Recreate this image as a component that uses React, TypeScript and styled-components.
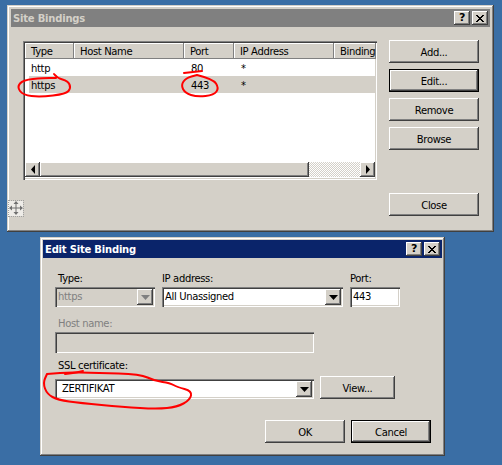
import React from 'react'
import styled, { createGlobalStyle, css } from 'styled-components'

const columns = [
  { label: 'Type', width: 49 },
  { label: 'Host Name', width: 110 },
  { label: 'Port', width: 50 },
  { label: 'IP Address', width: 100 },
  { label: 'Binding', width: 42 },
]

const bindings = [
  { type: 'http', port: '80', ip: '*', selected: false },
  { type: 'https', port: '443', ip: '*', selected: true },
]

// hand drawn red marks, smoothed through their midpoints
const marks: number[][][] = [
  [[54, 74], [57, 78], [68, 81], [71, 88], [66, 94], [40, 97], [23, 95], [17, 87], [23, 80], [43, 78], [56, 78]],
  [[184, 73], [193, 72], [202, 71]],
  [[197, 75], [213, 79], [219, 88], [214, 95], [197, 97], [185, 93], [181, 85], [186, 78], [197, 75]],
  [[65, 374], [74, 373], [83, 371]],
  [[47, 374], [63, 372], [97, 373], [140, 374], [155, 381], [170, 383], [177, 387], [192, 391], [190, 400], [177, 407], [157, 409], [123, 407], [80, 403], [58, 400], [47, 394], [43, 383], [47, 374]],
]

function smooth(points: number[][]) {
  let d = `M${points[0][0]} ${points[0][1]}`
  for (let i = 1; i < points.length - 1; i++) {
    const midX = (points[i][0] + points[i + 1][0]) / 2
    const midY = (points[i][1] + points[i + 1][1]) / 2
    d += `Q${points[i][0]} ${points[i][1]} ${midX} ${midY}`
  }
  const last = points[points.length - 1]
  return `${d}L${last[0]} ${last[1]}`
}

function TitleButtons() {
  return (
    <Controls>
      <ControlButton>?</ControlButton>
      <ControlButton>
        <svg width="10" height="9" viewBox="0 0 10 9">
          <path d="M1 1l7 7M2 1l7 7M8 1L1 8M9 1L2 8" stroke="#000" strokeWidth="1" fill="none" />
        </svg>
      </ControlButton>
    </Controls>
  )
}

function Arrow({ dir, color = '#000' }: { dir: 'left' | 'right' | 'down'; color?: string }) {
  const shape = {
    left: 'M5 0v9L1 4.500z',
    right: 'M1 0v9l4-4.500z',
    down: 'M0 1h9L4.500 6z',
  }[dir]
  return (
    <svg width={dir === 'down' ? 9 : 6} height={dir === 'down' ? 6 : 9} viewBox={dir === 'down' ? '0 0 9 6' : '0 0 6 9'}>
      <path d={shape} fill={color} />
    </svg>
  )
}

function Combo({ value, disabled, width, indent = 1 }: { value: string; disabled?: boolean; width: number; indent?: number }) {
  return (
    <Sunken $width={width} $height={20} $disabled={disabled}>
      <ComboValue $disabled={disabled} $indent={indent}>
        {value}
      </ComboValue>
      <ComboArrow>
        <Arrow dir="down" color={disabled ? '#808080' : '#000'} />
      </ComboArrow>
    </Sunken>
  )
}

export default function App() {
  return (
    <>
      <GlobalStyle />
      <Page>
        <SiteBindings>
          <TitleBar>
            Site Bindings
            <TitleButtons />
          </TitleBar>
          <BindingsBody>
            <List>
              <HeaderRow>
                {columns.map((c) => (
                  <HeaderCell key={c.label} $width={c.width}>
                    {c.label}
                  </HeaderCell>
                ))}
              </HeaderRow>
              <Rows>
                {bindings.map((b) => (
                  <Row key={b.type} $selected={b.selected}>
                    <Cell $width={49}>{b.type}</Cell>
                    <Cell $width={111} />
                    <Cell $width={50}>{b.port}</Cell>
                    <Cell $width={99}>{b.ip}</Cell>
                  </Row>
                ))}
              </Rows>
              <Scrollbar>
                <ScrollButton>
                  <Arrow dir="left" />
                </ScrollButton>
                <ScrollThumb />
                <ScrollTrack />
                <ScrollButton>
                  <Arrow dir="right" />
                </ScrollButton>
              </Scrollbar>
            </List>
            <ButtonColumn>
              <Button $width={90}>Add...</Button>
              <Button $width={90} $focused>
                Edit...
              </Button>
              <Button $width={90}>Remove</Button>
              <Button $width={90}>Browse</Button>
              <CloseSlot>
                <Button $width={90}>Close</Button>
              </CloseSlot>
            </ButtonColumn>
          </BindingsBody>
          <Grip>
            <svg width="14" height="14" viewBox="0 0 14 14">
              <path d="M7 2v10M2 7h10" stroke="#707070" fill="none" />
              <path d="M7 0l2.500 3h-5zM7 14l-2.500-3h5zM0 7l3-2.500v5zM14 7l-3 2.500v-5z" fill="#707070" />
            </svg>
          </Grip>
        </SiteBindings>

        <EditBinding>
          <ActiveTitleBar>
            Edit Site Binding
            <TitleButtons />
          </ActiveTitleBar>
          <EditBody>
            <FieldRow>
              <Field>
                <Label>Type:</Label>
                <Combo value="https" disabled width={100} />
              </Field>
              <Field>
                <FlushLabel>IP address:</FlushLabel>
                <Combo value="All Unassigned" width={181} />
              </Field>
              <Field>
                <FlushLabel>Port:</FlushLabel>
                <Sunken $width={50} $height={20}>
                  <ComboValue $indent={1}>443</ComboValue>
                </Sunken>
              </Field>
            </FieldRow>
            <HostField>
              <Label $disabled>Host name:</Label>
              <Sunken $width={259} $height={21} $disabled />
            </HostField>
            <SslField>
              <Label>SSL certificate:</Label>
              <CertRow>
                <Combo value="ZERTIFIKAT" width={259} indent={5} />
                <Button $width={75}>View...</Button>
              </CertRow>
            </SslField>
            <Footer>
              <Button $width={80}>OK</Button>
              <Button $width={80} $focused>
                Cancel
              </Button>
            </Footer>
          </EditBody>
        </EditBinding>

        <Scribbles viewBox="0 0 502 465">
          {marks.map((m, i) => (
            <path key={i} d={smooth(m)} />
          ))}
        </Scribbles>
      </Page>
    </>
  )
}

///////////////////////////////////////////////////////////////////////////////////

const GlobalStyle = createGlobalStyle`
  html, body {
    margin: 0;
    background: #3a6ea5;
    overflow: hidden;
  }
  body {
    font-family: "DejaVu Sans", "Liberation Sans", sans-serif;
    font-size: 10px;
    letter-spacing: -0.35px;
    color: #000;
  }
`

const raised = css`
  box-shadow: inset -1px -1px 0 #404040, inset 1px 1px 0 #fff, inset -2px -2px 0 #808080;
`

const Page = styled.div`
  position: relative;
  width: 502px;
  height: 465px;
  padding-top: 5px;
  box-sizing: border-box;
  display: flex;
  flex-direction: column;
  gap: 5px;
`

const Window = styled.div`
  position: relative;
  box-sizing: border-box;
  background: #d4d0c8;
  display: flex;
  flex-direction: column;
  box-shadow: inset -1px -1px 0 #404040, inset 1px 1px 0 #d4d0c8, inset -2px -2px 0 #808080, inset 2px 2px 0 #fff;
`

const SiteBindings = styled(Window)`
  margin-left: 7px;
  width: 487px;
  height: 227px;
  padding: 4px;
`

const EditBinding = styled(Window)`
  margin-left: 40px;
  width: 405px;
  height: 219px;
  padding: 3px;
`

const TitleBar = styled.div`
  position: relative;
  flex: none;
  height: 18px;
  line-height: 19px;
  padding-left: 2px;
  background: #808080;
  color: #d4d0c8;
  font-size: 10px;
  font-weight: 700;
  letter-spacing: -0.2px;
`

const ActiveTitleBar = styled(TitleBar)`
  background: #0a246a;
  color: #fff;
`

const Controls = styled.div`
  position: absolute;
  top: 2px;
  right: 2px;
  display: flex;
  gap: 2px;
`

const ControlButton = styled.div`
  ${raised}
  width: 16px;
  height: 14px;
  background: #d4d0c8;
  color: #000;
  display: flex;
  align-items: center;
  justify-content: center;
  font-size: 11px;
  line-height: 14px;
  font-weight: 700;
`

const BindingsBody = styled.div`
  flex: 1;
  display: flex;
  gap: 12px;
  padding: 13px 0 0 12px;
`

const List = styled.div`
  box-sizing: border-box;
  width: 354px;
  height: 139px;
  margin-top: 1px;
  padding: 2px;
  background: #fff;
  display: flex;
  flex-direction: column;
  overflow: hidden;
  box-shadow: inset 1px 1px 0 #808080, inset 2px 2px 0 #404040, inset -1px -1px 0 #fff, inset -2px -2px 0 #d4d0c8;
`

const HeaderRow = styled.div`
  flex: none;
  display: flex;
  height: 16px;
`

const HeaderCell = styled.div<{ $width: number }>`
  box-sizing: border-box;
  flex: none;
  width: ${(p) => p.$width}px;
  height: 16px;
  line-height: 18px;
  padding-left: 6px;
  background: #d4d0c8;
  white-space: nowrap;
  overflow: hidden;
  box-shadow: inset -1px -1px 0 #808080, inset 1px 1px 0 #fff;
`

const Rows = styled.div`
  flex: 1;
`

const Row = styled.div<{ $selected: boolean }>`
  display: flex;
  height: 17px;
  line-height: 19px;
  margin-left: 4px;
  background: ${(p) => (p.$selected ? '#d4d0c8' : 'transparent')};
`

const Cell = styled.div<{ $width: number }>`
  flex: none;
  box-sizing: border-box;
  width: ${(p) => p.$width}px;
  padding-left: 2px;
`

const Scrollbar = styled.div`
  flex: none;
  display: flex;
  height: 15px;
  margin-bottom: 1px;
`

const ScrollButton = styled.div`
  ${raised}
  flex: none;
  width: 15px;
  background: #d4d0c8;
  display: flex;
  align-items: center;
  justify-content: center;
`

const ScrollThumb = styled.div`
  ${raised}
  flex: none;
  width: 269px;
  background: #d4d0c8;
`

const ScrollTrack = styled.div`
  flex: 1;
  background: repeating-conic-gradient(#fff 0 25%, #d4d0c8 0 50%) 0 0 / 2px 2px;
`

const ButtonColumn = styled.div`
  display: flex;
  flex-direction: column;
  gap: 6px;
`

const CloseSlot = styled.div`
  margin-top: 37px;
`

const Button = styled.div<{ $width: number; $focused?: boolean }>`
  box-sizing: border-box;
  width: ${(p) => p.$width}px;
  height: 23px;
  padding-top: 2px;
  line-height: 22px;
  flex: none;
  text-align: center;
  background: #d4d0c8;
  ${(p) =>
    p.$focused
      ? 'box-shadow: inset 0 0 0 1px #000, inset -2px -2px 0 #404040, inset 2px 2px 0 #fff, inset -3px -3px 0 #808080;'
      : 'box-shadow: inset -1px -1px 0 #404040, inset 1px 1px 0 #fff, inset -2px -2px 0 #808080;'}
`

const Grip = styled.div`
  position: absolute;
  left: 2px;
  bottom: 16px;
  width: 14px;
  height: 15px;
  background: #eeece8;
  outline: 1px dotted #a0a0a0;
`

const EditBody = styled.div`
  flex: 1;
  display: flex;
  flex-direction: column;
  padding: 13px 12px 0;
`

const FieldRow = styled.div`
  display: flex;
  gap: 7px;
`

const Field = styled.div`
  display: flex;
  flex-direction: column;
  gap: 1px;
`

const Label = styled.div<{ $disabled?: boolean }>`
  height: 15px;
  line-height: 15px;
  padding-left: 3px;
  color: ${(p) => (p.$disabled ? '#808080' : '#000')};
`

const FlushLabel = styled(Label)`
  padding-left: 0;
`

const HostField = styled(Field)`
  margin-top: 9px;
`

const SslField = styled.div`
  margin-top: 5px;
`

const CertRow = styled.div`
  display: flex;
  align-items: flex-end;
  gap: 6px;
  margin-top: 3px;
`

const Sunken = styled.div<{ $width: number; $height: number; $disabled?: boolean }>`
  box-sizing: border-box;
  width: ${(p) => p.$width}px;
  height: ${(p) => p.$height}px;
  padding: 2px;
  display: flex;
  background: ${(p) => (p.$disabled ? '#d4d0c8' : '#fff')};
  box-shadow: inset 1px 1px 0 #808080, inset 2px 2px 0 #404040, inset -1px -1px 0 #fff, inset -2px -2px 0 #d4d0c8;
`

const ComboValue = styled.div<{ $disabled?: boolean; $indent: number }>`
  flex: 1;
  line-height: 15px;
  padding-left: ${(p) => p.$indent}px;
  white-space: pre;
  color: ${(p) => (p.$disabled ? '#808080' : '#000')};
`

const ComboArrow = styled.div`
  ${raised}
  flex: none;
  width: 16px;
  background: #d4d0c8;
  display: flex;
  align-items: center;
  justify-content: center;
`

const Footer = styled.div`
  display: flex;
  justify-content: flex-end;
  gap: 6px;
  margin-top: 21px;
  margin-right: -1px;
`

const Scribbles = styled.svg`
  position: absolute;
  left: 0;
  top: 0;
  width: 502px;
  height: 465px;
  pointer-events: none;
  fill: none;
  stroke: #f00;
  stroke-width: 2;
  stroke-linecap: round;
  stroke-linejoin: round;
`
